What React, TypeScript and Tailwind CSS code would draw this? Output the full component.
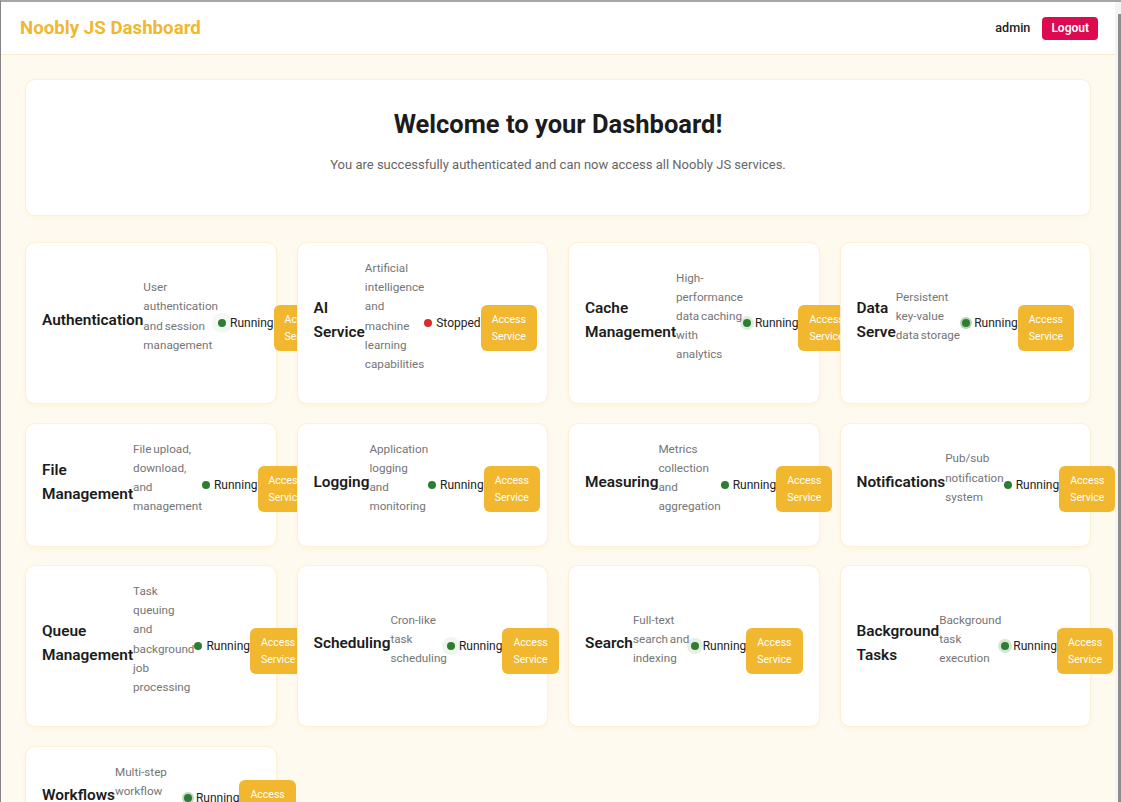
import React from 'react'

type Service = {
  name: string
  desc: string
  running: boolean
  pulse: string
}

// pulse = where the dot's ring animation happened to be when the picture was taken
const services: Service[] = [
  { name: 'Authentication', desc: 'User authentication and session management', running: true, pulse: 'shadow-[0_0_0_6px_rgba(46,125,50,0.05)]' },
  { name: 'AI Service', desc: 'Artificial intelligence and machine learning capabilities', running: false, pulse: '' },
  { name: 'Cache Management', desc: 'High-performance data caching with analytics', running: true, pulse: 'shadow-[0_0_0_3px_rgba(46,125,50,0.15)]' },
  { name: 'Data Serve', desc: 'Persistent key-value data storage', running: true, pulse: 'shadow-[0_0_0_2px_rgba(46,125,50,0.35)]' },
  { name: 'File Management', desc: 'File upload, download, and management', running: true, pulse: '' },
  { name: 'Logging', desc: 'Application logging and monitoring', running: true, pulse: '' },
  { name: 'Measuring', desc: 'Metrics collection and aggregation', running: true, pulse: '' },
  { name: 'Notifications', desc: 'Pub/sub notification system', running: true, pulse: '' },
  { name: 'Queue Management', desc: 'Task queuing and background job processing', running: true, pulse: '' },
  { name: 'Scheduling', desc: 'Cron-like task scheduling', running: true, pulse: 'shadow-[0_0_0_5px_rgba(46,125,50,0.08)]' },
  { name: 'Search', desc: 'Full-text search and indexing', running: true, pulse: 'shadow-[0_0_0_4px_rgba(46,125,50,0.12)]' },
  { name: 'Background Tasks', desc: 'Background task execution', running: true, pulse: 'shadow-[0_0_0_3px_rgba(46,125,50,0.2)]' },
  { name: 'Workflows', desc: 'Multi-step workflow orchestration', running: true, pulse: 'shadow-[0_0_0_2px_rgba(46,125,50,0.3)]' },
]

function ServiceCard({ service }: { service: Service }) {
  return (
    <div className="relative flex items-center p-4 bg-white rounded-[10px] border border-[#fcf0d6] shadow-[0_2px_5px_rgba(240,183,47,0.10)]">
      <h3 className="mb-1.5 text-[15.4px] leading-6 font-semibold text-[#1c1c1c]">{service.name}</h3>
      <p className="mb-[13px] text-[11.7px] leading-[19.2px] [word-spacing:-1px] text-[#757575]">{service.desc}</p>
      <div className="flex items-center gap-1 whitespace-nowrap text-xs text-[#222]">
        <span
          className={`w-2 h-2 shrink-0 rounded-full ${service.running ? 'bg-[#2e7d32]' : 'bg-[#d32f2f]'} ${service.pulse}`}
        />
        <span>{service.running ? 'Running' : 'Stopped'}</span>
      </div>
      <button className="mt-[9px] px-[11px] py-1.5 rounded-md bg-[#f0b72f] text-white text-[10.5px] leading-[17px]">
        Access Service
      </button>
    </div>
  )
}

export default function App() {
  return (
    <div className="flex h-screen overflow-hidden border-t-2 border-l border-t-[#a6a6a6] border-l-[#858585] bg-[#fffaf0] font-['Segoe_UI',Roboto,'Noto_Sans',sans-serif]">
      <div className="flex-1 min-w-0">
        {/* ── Header ── */}
        <header className="h-[53px] flex items-center justify-between pl-[19px] pr-[17px] bg-white border-b border-[#fbedcc]">
          <h1 className="text-[18.7px] font-bold text-[#f0b72f]">Noobly JS Dashboard</h1>
          <div className="flex items-center gap-3">
            <span className="text-[12.6px] font-medium text-[#222]">admin</span>
            <button className="px-[9px] py-1 rounded-[4px] bg-[#dd0a50] text-white text-xs leading-[15px] font-semibold">
              Logout
            </button>
          </div>
        </header>

        <main className="px-6 pt-6 pb-6">
          {/* ── Welcome ── */}
          <section className="pt-[30px] pb-[40px] text-center bg-white rounded-[10px] border border-[#fcf0d6] shadow-[0_2px_5px_rgba(240,183,47,0.08)]">
            <h2 className="mb-[15px] text-[25.5px] leading-[29px] font-bold text-[#1c1c1c]">Welcome to your Dashboard!</h2>
            <p className="text-[13px] leading-[21px] text-[#666]">
              You are successfully authenticated and can now access all Noobly JS services.
            </p>
          </section>

          {/* ── Services ── */}
          <div className="mt-[26px] grid grid-cols-4 gap-x-5 gap-y-[18.5px]">
            {services.map((s) => (
              <ServiceCard key={s.name} service={s} />
            ))}
          </div>
        </main>
      </div>

      {/* window scrollbar */}
      <div className="w-[6px] shrink-0 flex flex-col items-end pt-3 bg-[#f4f4f4]">
        <div className="w-[3px] flex-1 bg-[#8d8d8d]" />
      </div>
    </div>
  )
}
